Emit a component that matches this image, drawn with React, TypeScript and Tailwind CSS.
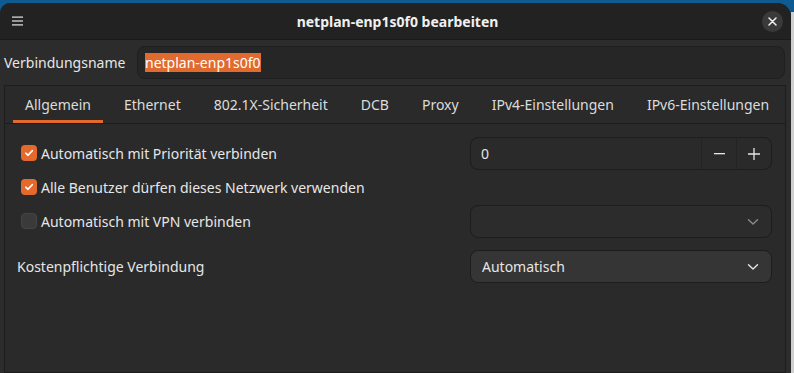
import React from 'react';

const font = { fontFamily: '"Noto Sans", "Open Sans", sans-serif' };

const tabs = ['Allgemein', 'Ethernet', '802.1X-Sicherheit', 'DCB', 'Proxy', 'IPv4-Einstellungen', 'IPv6-Einstellungen'];

const Check: React.FC<{ checked?: boolean }> = ({ checked }) =>
  checked ? (
    <span className="w-4 h-4 rounded-[4px] bg-[#e4692d] flex items-center justify-center shrink-0">
      <svg width="10" height="10" viewBox="0 0 10 10" fill="none">
        <path d="M1.8 5.2 L4 7.3 L8.3 2.6" stroke="white" strokeWidth="1.6" strokeLinecap="round" strokeLinejoin="round" />
      </svg>
    </span>
  ) : (
    <span className="w-4 h-4 rounded-[4px] bg-[#3a3a3a] border border-[#454545] shrink-0" />
  );

const Chevron: React.FC<{ dim?: boolean }> = ({ dim }) => (
  <svg width="12" height="8" viewBox="0 0 12 8" fill="none">
    <path d="M1.5 1.8 L6 6 L10.5 1.8" stroke={dim ? '#8a8a8a' : '#e6e6e6'} strokeWidth="1.4" strokeLinecap="round" strokeLinejoin="round" />
  </svg>
);

const CheckRow: React.FC<{ checked?: boolean; label: string }> = ({ checked, label }) => (
  <div className="flex items-center gap-[4px] h-[34px]">
    <Check checked={checked} />
    <span className="text-[14px] text-[#e6e6e6]">{label}</span>
  </div>
);

export default function App() {
  return (
    <div className="w-[794px] h-[373px] bg-[#0e5b91] flex overflow-hidden" style={font}>
      <div className="w-[791px] mt-[3px] rounded-tl-[10px] rounded-tr-[14px] bg-[#2c2c2c] flex flex-col overflow-hidden">
        {/* title bar */}
        <div className="h-[37px] bg-[#222222] border-b border-[#1a1a1a] flex items-center px-[12px] shrink-0">
          <svg width="11" height="10" viewBox="0 0 11 10">
            <rect x="0" y="0.5" width="11" height="1.2" fill="#e6e6e6" />
            <rect x="0" y="4.4" width="11" height="1.2" fill="#e6e6e6" />
            <rect x="0" y="8.3" width="11" height="1.2" fill="#e6e6e6" />
          </svg>
          <div className="flex-1 text-center text-[14px] font-bold text-[#f0f0f0] pl-[10px]">netplan-enp1s0f0 bearbeiten</div>
          <div className="w-[21px] h-[21px] rounded-full bg-[#3a3a3a] flex items-center justify-center mr-[-4px]">
            <svg width="9" height="9" viewBox="0 0 9 9">
              <path d="M1 1 L8 8 M8 1 L1 8" stroke="#f0f0f0" strokeWidth="1.5" strokeLinecap="round" />
            </svg>
          </div>
        </div>

        {/* connection name */}
        <div className="flex items-center pl-[4px] pr-[6px] mt-[6px] h-[33px] shrink-0">
          <span className="w-[133px] text-[14px] text-[#e6e6e6]">Verbindungsname</span>
          <div className="flex-1 h-[33px] rounded-[8px] bg-[#262626] border border-[#1f1f1f] flex items-center px-[7px]">
            <span className="bg-[#e16a2e] text-white text-[14px] leading-[19px]">netplan-enp1s0f0</span>
          </div>
        </div>

        {/* notebook */}
        <div className="flex-1 mt-[6px] ml-[4px] mr-[5px] border border-[#1c1c1c] bg-[#2a2a2a] flex flex-col">
          <div className="h-[38px] border-b border-[#1c1c1c] flex items-stretch gap-[9px] pl-[8px] shrink-0">
            {tabs.map((t, i) => (
              <div key={t} className="relative flex items-center px-[12px] text-[14px] text-[#dcdcdc]">
                {t}
                {i === 0 && <span className="absolute left-[0px] right-[0px] bottom-[0px] h-[3px] bg-[#e4692d]" />}
              </div>
            ))}
          </div>

          <div className="flex pt-[12px] pl-[16px] pr-[13px]">
            <div className="flex-1">
              <CheckRow checked label="Automatisch mit Priorität verbinden" />
              <CheckRow checked label="Alle Benutzer dürfen dieses Netzwerk verwenden" />
              <CheckRow label="Automatisch mit VPN verbinden" />
              <div className="h-[46px] flex items-center text-[14px] text-[#e6e6e6] ml-[-4px] mt-[5px]">Kostenpflichtige Verbindung</div>
            </div>
            <div className="w-[302px] flex flex-col">
              <div className="h-[33px] mt-[1px] rounded-[8px] border border-[#1d1d1d] bg-[#2a2a2a] flex items-stretch">
                <div className="flex-1 flex items-center pl-[10px] text-[14px] text-[#e6e6e6]">0</div>
                <div className="w-[35px] border-l border-[#232323] flex items-center justify-center">
                  <svg width="11" height="2" viewBox="0 0 11 2"><rect width="11" height="1.3" fill="#e6e6e6" /></svg>
                </div>
                <div className="w-[35px] border-l border-[#232323] flex items-center justify-center">
                  <svg width="12" height="12" viewBox="0 0 12 12"><path d="M6 0 V12 M0 6 H12" stroke="#e6e6e6" strokeWidth="1.3" /></svg>
                </div>
              </div>
              <div className="h-[33px] mt-[35px] rounded-[8px] border border-[#1d1d1d] bg-[#2c2c2c] flex items-center justify-end pr-[12px]">
                <Chevron dim />
              </div>
              <div className="h-[33px] mt-[12px] rounded-[8px] border border-[#1d1d1d] bg-[#353535] flex items-center justify-between pl-[11px] pr-[12px]">
                <span className="text-[14px] text-[#e6e6e6]">Automatisch</span>
                <Chevron />
              </div>
            </div>
          </div>
        </div>
      </div>
      <div className="flex-1 flex flex-col">
        <div className="h-[12px] bg-[#0e5b91]" />
        <div className="flex-1 bg-[#cfcfcf]" />
      </div>
    </div>
  );
}
